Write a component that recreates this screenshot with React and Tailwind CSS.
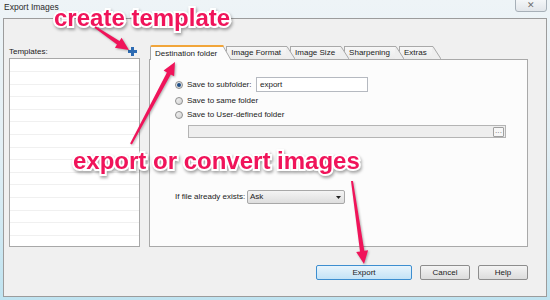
const ui = "font-['Liberation_Sans',Arial,sans-serif]"

const tabs = ['Destination folder', 'Image Format', 'Image Size', 'Sharpening', 'Extras']

function arrowPoints(x1, y1, x2, y2, tail = 1, shaft = 2.2, headLen = 13, headW = 6) {
  const dx = x2 - x1
  const dy = y2 - y1
  const len = Math.hypot(dx, dy)
  const ux = dx / len
  const uy = dy / len
  const nx = -uy
  const ny = ux
  const bx = x2 - ux * headLen
  const by = y2 - uy * headLen
  const p = (x, y) => `${x.toFixed(1)},${y.toFixed(1)}`
  return [
    p(x1 + nx * tail, y1 + ny * tail),
    p(bx + nx * shaft, by + ny * shaft),
    p(bx + nx * headW, by + ny * headW),
    p(x2, y2),
    p(bx - nx * headW, by - ny * headW),
    p(bx - nx * shaft, by - ny * shaft),
    p(x1 - nx * tail, y1 - ny * tail),
  ].join(' ')
}

function Radio({ checked = false }) {
  return (
    <span className="w-[8px] h-[8px] rounded-full border border-[#8e8f8f] bg-gradient-to-br from-[#f2f2f2] to-[#d4d4d4] flex items-center justify-center shrink-0">
      {checked && <span className="w-[4px] h-[4px] rounded-full bg-[#1f4f86]" />}
    </span>
  )
}

function Tab({ label, active, z }) {
  return (
    <div className={`relative flex ${active ? 'h-[15px] -mb-px' : 'h-[13px]'} ${z} -mr-[5px]`}>
      <div
        className={`flex items-center pl-[4px] pr-[5px] border-l border-[#a9a9a9] ${
          active
            ? 'bg-[#fcfcfc] border-t-2 border-t-[#f1a53a] rounded-tl-[2px]'
            : 'bg-gradient-to-b from-[#f7f7f7] to-[#ebebeb] border-t'
        }`}
      >
        <span className="text-[8px] leading-none text-[#1b1b1b] whitespace-nowrap">{label}</span>
      </div>
      <svg width="9" height={active ? 15 : 13} className="shrink-0">
        <polygon
          points={active ? '0,0 1,0 9,15 0,15' : '0,0 1,0 9,13 0,13'}
          fill={active ? '#fcfcfc' : '#eeeeee'}
        />
        <polyline
          points={active ? '0,1 1,1 9,15' : '0,0.5 1,0.5 9,13'}
          fill="none"
          stroke="#a9a9a9"
          strokeWidth="1"
        />
        {active && <line x1="0" y1="1" x2="1.5" y2="1" stroke="#f1a53a" strokeWidth="2" />}
      </svg>
    </div>
  )
}

const noteCls =
  "absolute z-[30] text-[24px] font-bold leading-[30px] text-[#f0145a] font-['Liberation_Sans',Arial,sans-serif] [-webkit-text-stroke:4px_white] [paint-order:stroke_fill] drop-shadow-[1px_2px_1.5px_rgba(0,0,0,0.35)] whitespace-nowrap"

export default function App() {
  const zs = ['z-[10]', 'z-[4]', 'z-[3]', 'z-[2]', 'z-[1]']

  return (
    <div className={`relative w-[550px] h-[300px] overflow-hidden bg-gradient-to-b from-[#eef4f7] via-[#e2eff5] to-[#bfe3f0] ${ui}`}>
      {/* title bar */}
      <div className="h-[18px] flex items-start justify-between pl-[4px] pr-[3px]">
        <span className="mt-[3px] text-[8.5px] leading-none text-[#2a2a2a]">Export Images</span>
        <div className="w-[32px] h-[13px] -mt-px rounded-b-[3px] border border-[#a7b0b8] bg-gradient-to-b from-[#f4f6f8] to-[#e2e6ea] flex items-center justify-center text-[9px] leading-none text-[#6e6e6e]">
          ✕
        </div>
      </div>

      {/* client area */}
      <div className="mx-[3px] h-[279px] bg-[#f0f0f0] border border-[#9c9c9c] flex flex-col pt-[26px] pl-[5px] pr-[18px]">
        <div className="flex gap-[9px]">
          {/* templates */}
          <div className="w-[131px] flex flex-col">
            <div className="h-[13px] flex items-center justify-between pr-[3px]">
              <span className="text-[8px] leading-none text-[#1b1b1b]">Templates:</span>
              <svg width="9" height="9" viewBox="0 0 9 9">
                <rect x="3" y="0" width="3" height="9" fill="#2d6bb3" />
                <rect x="0" y="3" width="9" height="3" fill="#2d6bb3" />
              </svg>
            </div>
            <div className="h-[189px] bg-white border border-[#a8a8a8] flex flex-col pt-[12px] overflow-hidden">
              {Array.from({ length: 15 }).map((_, i) => (
                <div key={i} className="h-[12.6px] border-t border-[#f0f0f0] shrink-0" />
              ))}
            </div>
          </div>

          {/* tabs */}
          <div className="w-[379px] flex flex-col">
            <div className="flex h-[14px] items-end pl-px">
              {tabs.map((t, i) => (
                <Tab key={t} label={t} active={i === 0} z={zs[i]} />
              ))}
            </div>
            <div className="relative z-[5] h-[188px] bg-[#fcfcfc] border border-[#a9a9a9] pt-[17px] pl-[25px] text-[8px] leading-none text-[#1b1b1b]">
              <div className="flex items-center h-[15px]">
                <Radio checked />
                <span className="ml-[4px] w-[69px] whitespace-nowrap">Save to subfolder:</span>
                <div className="w-[112px] h-[15px] border border-[#b5b9c0] bg-white flex items-center pl-[3px]">export</div>
              </div>
              <div className="flex items-center h-[15px] mt-px">
                <Radio />
                <span className="ml-[4px]">Save to same folder</span>
              </div>
              <div className="flex items-center h-[14px]">
                <Radio />
                <span className="ml-[4px]">Save to User-defined folder</span>
              </div>
              <div className="ml-[13px] mt-[3px] w-[318px] h-[13px] border border-[#b4b4b4] bg-[#eeeeee] flex justify-end items-center pr-px">
                <div className="w-[11px] h-[10px] border border-[#a0a0a0] rounded-[1px] bg-[#f7f7f7] flex items-end justify-center text-[7px] leading-[7px] text-[#555]">
                  ···
                </div>
              </div>
              <div className="flex items-center mt-[52px] h-[14px]">
                <span className="w-[72px] whitespace-nowrap">If file already exists:</span>
                <div className="w-[98px] h-[14px] border border-[#a8a8a8] rounded-[2px] bg-gradient-to-b from-[#f4f4f4] to-[#dedede] flex items-center justify-between pl-[2px] pr-[3px]">
                  <span>Ask</span>
                  <svg width="5" height="3" viewBox="0 0 5 3">
                    <polygon points="0,0 5,0 2.5,3" fill="#222" />
                  </svg>
                </div>
              </div>
            </div>
          </div>
        </div>

        {/* buttons */}
        <div className="flex justify-end gap-[8px] mt-[18px] text-[8px] leading-none text-[#1b1b1b]">
          <button className="w-[96px] h-[15px] rounded-[2px] border border-[#3d8ed0] bg-gradient-to-b from-[#e8f4fc] to-[#c4e3f6] flex items-center justify-center">
            Export
          </button>
          <button className="w-[50px] h-[15px] rounded-[2px] border border-[#8d8d8d] bg-gradient-to-b from-[#f4f4f4] to-[#dcdcdc] flex items-center justify-center">
            Cancel
          </button>
          <button className="w-[50px] h-[15px] rounded-[2px] border border-[#8d8d8d] bg-gradient-to-b from-[#f4f4f4] to-[#dcdcdc] flex items-center justify-center">
            Help
          </button>
        </div>
      </div>

      {/* annotations */}
      <div className={`${noteCls} left-[54px] top-[3px]`}>create template</div>
      <div className={`${noteCls} left-[73px] top-[146px]`}>export or convert images</div>
      <svg className="absolute inset-0 z-[30] pointer-events-none drop-shadow-[1px_1px_1px_rgba(0,0,0,0.3)]" width="550" height="300">
        <polygon points={arrowPoints(95, 27, 129, 50)} fill="#f0145a" />
        <polygon points={arrowPoints(131, 144, 175, 62)} fill="#f0145a" />
        <polygon points={arrowPoints(352, 181, 364, 264)} fill="#f0145a" />
      </svg>
    </div>
  )
}
